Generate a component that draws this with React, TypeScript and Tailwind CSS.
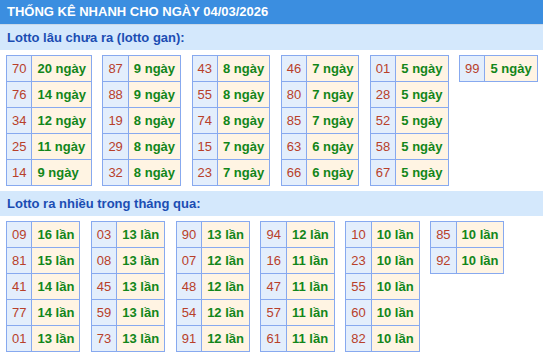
const ganTables: [string, string][][] = [
  [["70", "20 ngày"], ["76", "14 ngày"], ["34", "12 ngày"], ["25", "11 ngày"], ["14", "9 ngày"]],
  [["87", "9 ngày"], ["88", "9 ngày"], ["19", "8 ngày"], ["29", "8 ngày"], ["32", "8 ngày"]],
  [["43", "8 ngày"], ["55", "8 ngày"], ["74", "8 ngày"], ["15", "7 ngày"], ["23", "7 ngày"]],
  [["46", "7 ngày"], ["80", "7 ngày"], ["85", "7 ngày"], ["63", "6 ngày"], ["66", "6 ngày"]],
  [["01", "5 ngày"], ["28", "5 ngày"], ["52", "5 ngày"], ["58", "5 ngày"], ["67", "5 ngày"]],
  [["99", "5 ngày"]],
];

const hotTables: [string, string][][] = [
  [["09", "16 lần"], ["81", "15 lần"], ["41", "14 lần"], ["77", "14 lần"], ["01", "13 lần"]],
  [["03", "13 lần"], ["08", "13 lần"], ["45", "13 lần"], ["59", "13 lần"], ["73", "13 lần"]],
  [["90", "13 lần"], ["07", "12 lần"], ["48", "12 lần"], ["54", "12 lần"], ["91", "12 lần"]],
  [["94", "12 lần"], ["16", "11 lần"], ["47", "11 lần"], ["57", "11 lần"], ["61", "11 lần"]],
  [["10", "10 lần"], ["23", "10 lần"], ["55", "10 lần"], ["60", "10 lần"], ["82", "10 lần"]],
  [["85", "10 lần"], ["92", "10 lần"]],
];

function LotoTable({ rows }: { rows: [string, string][] }) {
  return (
    <table className="border-collapse self-start">
      <tbody>
        {rows.map(([num, val]) => (
          <tr key={num}>
            <td className="border border-[#87a9ef] bg-[#e3eefc] px-[5px] py-[5px] text-center leading-[15px] text-[#b8402a]">
              {num}
            </td>
            <td className="border border-[#87a9ef] bg-[#fff4e3] px-[5px] py-[5px] text-left font-bold leading-[15px] text-[#12861a]">
              {val}
            </td>
          </tr>
        ))}
      </tbody>
    </table>
  );
}

function Section({ title, tables }: { title: string; tables: [string, string][][] }) {
  return (
    <div>
      <div className="flex h-[25px] items-center bg-[#d4e8fc] px-[7px] font-bold text-[#1b4db3]">
        {title}
      </div>
      <div className="flex items-start gap-[10.5px] py-[5px] pl-[6px]">
        {tables.map((rows, i) => (
          <LotoTable key={i} rows={rows} />
        ))}
      </div>
    </div>
  );
}

export default function App() {
  return (
    <div className="h-[355px] w-[543px] overflow-hidden bg-white font-['Liberation_Sans',Arial,sans-serif] text-[13px]">
      <div className="flex h-[24px] items-center bg-[#3b8ee0] px-[7px] font-bold text-white">
        THỐNG KÊ NHANH CHO NGÀY 04/03/2026
      </div>
      <div className="h-px bg-[#c9d8e8]" />
      <Section title="Lotto lâu chưa ra (lotto gan):" tables={ganTables} />
      <Section title="Lotto ra nhiều trong tháng qua:" tables={hotTables} />
    </div>
  );
}
